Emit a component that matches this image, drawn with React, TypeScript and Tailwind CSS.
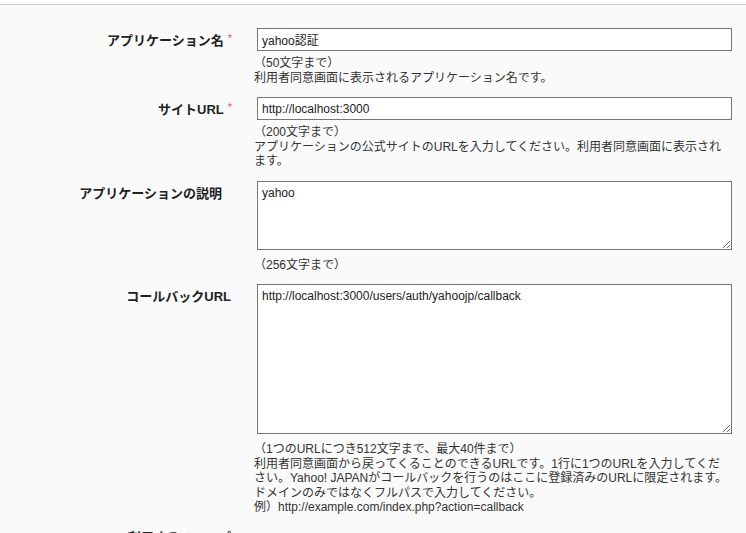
import React from "react";

interface Field {
  label: string;
  required?: boolean;
  kind: "input" | "textarea";
  value: string;
  height?: string;
  notes: React.ReactNode;
  labelPad?: string;
}

const FONT = "font-['Liberation_Sans','Noto_Sans_CJK_JP',sans-serif]";

const fields: Field[] = [
  {
    label: "アプリケーション名",
    required: true,
    kind: "input",
    value: "yahoo認証",
    notes: (
      <>
        <p>（50文字まで）</p>
        <p>利用者同意画面に表示されるアプリケーション名です。</p>
      </>
    ),
  },
  {
    label: "サイトURL",
    required: true,
    kind: "input",
    value: "http://localhost:3000",
    notes: (
      <>
        <p>（200文字まで）</p>
        <p>アプリケーションの公式サイトのURLを入力してください。利用者同意画面に表示されます。</p>
      </>
    ),
  },
  {
    label: "アプリケーションの説明",
    kind: "textarea",
    value: "yahoo",
    height: "h-[69px]",
    labelPad: "pr-[10px]",
    notes: <p>（256文字まで）</p>,
  },
  {
    label: "コールバックURL",
    kind: "textarea",
    value: "http://localhost:3000/users/auth/yahoojp/callback",
    height: "h-[150px]",
    labelPad: "pr-[1px]",
    notes: (
      <>
        <p>（1つのURLにつき512文字まで、最大40件まで）</p>
        <p>
          利用者同意画面から戻ってくることのできるURLです。1行に1つのURLを入力してください。Yahoo! JAPANがコールバックを行うのはここに登録済みのURLに限定されます。ドメインのみではなくフルパスで入力してください。
        </p>
        <p>例）http://example.com/index.php?action=callback</p>
      </>
    ),
  },
];

function Row({ field }: { field: Field }) {
  const box =
    "ml-[3px] block w-[475px] border border-[#767676] bg-white px-[4px] text-[12px] text-[#222] outline-none";
  return (
    <div className="flex">
      {/* Label column */}
      <div className={`w-[232px] shrink-0 text-right ${field.labelPad ?? ""}`}>
        <span className="text-[13px] font-bold leading-[23px] text-[#222]">{field.label}</span>
        {field.required && (
          <span className="ml-[4px] align-[3px] text-[11px] leading-none text-[#f4516c]">*</span>
        )}
      </div>

      {/* Control + notes */}
      <div className="ml-[22px] w-[478px]">
        {field.kind === "input" ? (
          <input className={`${box} h-[23px]`} defaultValue={field.value} />
        ) : (
          <textarea
            className={`${box} ${field.height} py-[4px] leading-[15px]`}
            defaultValue={field.value}
          />
        )}
        <div
          className={`${field.kind === "input" ? "mt-[5px]" : "mt-[8px]"} w-[474px] text-[12px] leading-[14.5px] text-[#333]`}
        >
          {field.notes}
        </div>
      </div>
    </div>
  );
}

export default function App() {
  return (
    <div className={`min-h-screen overflow-hidden bg-[#fafafa] ${FONT}`}>
      <div className="h-[4px] bg-white" />
      <div className="h-px bg-[#c8c8c8]" />

      <div className="flex flex-col gap-[12px] pt-[23px]">
        {fields.map((f) => (
          <Row key={f.label} field={f} />
        ))}

        {/* Next row, cut off by the window */}
        <div className="-mt-[2px] flex">
          <div className="w-[232px] shrink-0 pr-[1px] text-right">
            <span className="text-[13px] font-bold leading-[23px] text-[#222]">利用するスコープ</span>
          </div>
        </div>
      </div>
    </div>
  );
}
